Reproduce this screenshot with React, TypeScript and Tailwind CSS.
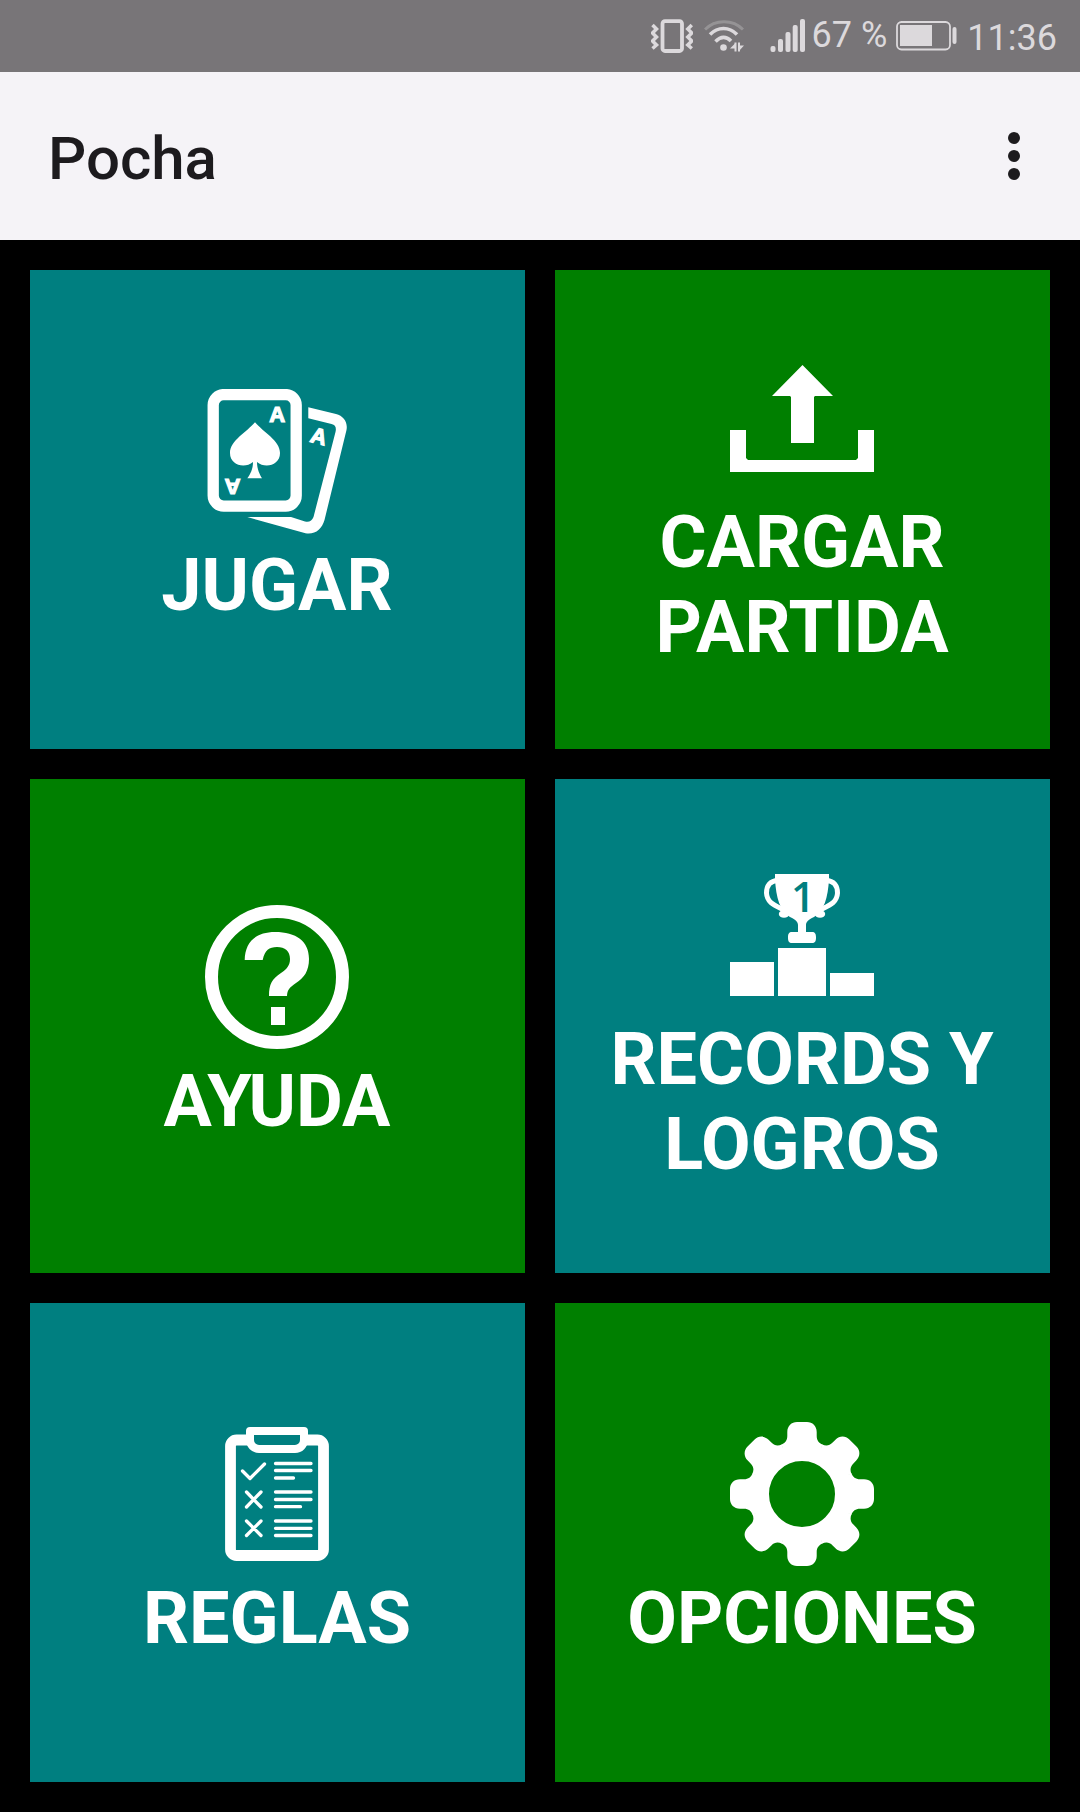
import type { ReactNode } from "react";

function VibrateIcon() {
  return (
    <svg width="42" height="34" viewBox="0 0 42 34" fill="none" stroke="currentColor">
      <rect x="11.5" y="2.2" width="19.5" height="29.800" rx="2.5" strokeWidth="3.800" />
      <path d="M1.500 6l4 4-4 4 4 4-4 4 4 4-4 3.500" strokeWidth="3.500" />
      <path d="M40.800 6l-4 4 4 4-4 4 4 4-4 4 4 3.500" strokeWidth="3.500" />
    </svg>
  );
}

function WifiIcon() {
  return (
    <svg width="40" height="34" viewBox="0 0 40 34" fill="none" stroke="currentColor">
      <path d="M1 10.500C11 0 29 0 39 10.500" strokeWidth="3" opacity="0.3" />
      <path d="M6 15.500C14 7.500 25 7.500 33 15.500" strokeWidth="3.600" />
      <path d="M11.500 22.500C17 17 22 17 27 22" strokeWidth="3.600" />
      <circle cx="19.500" cy="28.500" r="3.300" fill="currentColor" stroke="none" />
      <path d="M31.500 23.500v9M35 23.500v9" strokeWidth="2" />
      <path d="M31.500 24l-5.500 5.500h5.500zM35 32l5-5.500h-5z" fill="currentColor" stroke="none" />
    </svg>
  );
}

function SignalIcon() {
  return (
    <svg width="36" height="34" viewBox="0 0 36 34" fill="currentColor">
      <rect x="0.500" y="27" width="5" height="6" rx="2" />
      <rect x="8" y="20" width="5" height="13" rx="2" />
      <rect x="15.500" y="13" width="5" height="20" rx="2" />
      <rect x="22.700" y="6" width="5" height="27" rx="2" />
      <rect x="30" y="0" width="5" height="33" rx="2" />
    </svg>
  );
}

function BatteryIcon() {
  return (
    <svg width="62" height="30" viewBox="0 0 62 30" fill="none">
      <rect x="1" y="1" width="53" height="27.500" rx="4.500" stroke="currentColor" strokeWidth="1.800" />
      <rect x="4" y="4" width="32" height="21" fill="currentColor" />
      <rect x="56.500" y="6" width="4" height="17" rx="2" fill="currentColor" />
    </svg>
  );
}

function CardsIcon() {
  return (
    <svg width="144" height="146" viewBox="0 0 144 146" className="-mb-[2px]" fill="none">
      <rect x="8.200" y="5.600" width="83" height="111.500" rx="10.500" stroke="white" strokeWidth="11.300" />
      <path
        d="M103.300 18.300L131 25C138.500 27 143 33 141.500 41L119.500 131C117 140 110 146 100.500 144.300L42.300 128H86L100 132.500C104 133.500 107 132 108.500 128L130.500 43C131.500 38.500 130.500 36 126.500 35L103.300 29.300Z"
        fill="white"
      />
      <path
        d="M50 33.300C42 43 25 51.500 25 64C25 76.500 40 80 48 73C48 80 45.500 85 42.300 89.300H57C54.500 85 52 80 52 73C60 80 75 76.500 75 64C75 51.500 58 43 50 33.300Z"
        fill="white"
      />
      <g
        fill="white"
        stroke="white"
        strokeWidth="1.200"
        className="font-['Liberation_Sans',sans-serif] text-[22px] font-bold"
        textAnchor="middle"
      >
        <text x="72.300" y="33">A</text>
        <text transform="translate(27.500 89.500) rotate(180)">A</text>
        <text transform="translate(112 54.500) rotate(15)">A</text>
      </g>
    </svg>
  );
}

function UploadIcon() {
  return (
    <svg width="144" height="144" viewBox="0 0 144 144" fill="white">
      <path d="M72.500 19L103 50H85L84 51V97H61V51L60 50H42Z" />
      <path d="M0 84H16V112L18 114H126L128 112V84H144V126H0Z" />
    </svg>
  );
}

function HelpIcon() {
  return (
    <svg width="144" height="144" viewBox="0 0 144 144" fill="white">
      <circle cx="72" cy="72" r="65.500" fill="none" stroke="white" strokeWidth="13" />
      <path d="M39.700 55C40 37 51 27 70 27C91 27 104 36 104 54C104 66 99 73 91 78C85 82 82 85 82 91H64C64 79 67 74 76 68C82 64 85 60 85 54C85 46 80 42 72 42C64 42 60 45 57.700 55Z" />
      <path d="M66 102H80V120H66Z" />
    </svg>
  );
}

function PodiumIcon() {
  return (
    <svg width="144" height="144" viewBox="0 0 144 144" fill="white">
      <path d="M45 11H99V16C98 35 94 48 84 54C78 57 76 59 76 62V69H82C85 69 86 71 86 74V75C86 78 85 80 82 80H62C59 80 58 78 58 75V74C58 71 59 69 62 69H68V62C68 59 66 57 60 54C50 48 46 35 45 16Z" />
      <path
        d="M48 17.500C40 17.500 36.500 23 36.500 30C37 41 47 43 56 48M96 17.500C104 17.500 107.500 23 107.500 30C107 41 97 43 88 48"
        fill="none"
        stroke="white"
        strokeWidth="5"
      />
      <ellipse cx="54" cy="51" rx="5.200" ry="3.800" />
      <ellipse cx="90" cy="51" rx="5.200" ry="3.800" />
      <text
        x="61"
        y="49"
        className="fill-[#007f80] font-['Open_Sans',sans-serif] text-[42px] font-semibold"
      >
        1
      </text>
      <path d="M0 99H44V133H0ZM48 85H96V133H48ZM100 110H144V133H100Z" />
    </svg>
  );
}

function RulesIcon() {
  return (
    <svg width="144" height="144" viewBox="0 0 144 144" fill="none" stroke="white">
      <rect x="25.500" y="18" width="93" height="115.500" rx="6" strokeWidth="10.800" />
      <path
        d="M45 9H99V18C99 23 95 27 90 27H54C49 27 45 23 45 18Z"
        className="fill-[#007f80]"
        strokeWidth="8"
        strokeLinejoin="round"
      />
      <path
        d="M37.500 49L45 56.500L59.500 42M41.500 70L56 85M56 70L41.500 85M41.500 99L56 113.500M56 99L41.500 113.500"
        strokeWidth="3.300"
        strokeLinecap="round"
        strokeLinejoin="round"
      />
      <path
        d="M70.500 41.500H106M70.500 48.500H106M70.500 56H88.500M70.500 70H106M70.500 77.500H106M70.500 84.700H95.500M70.500 99H106M70.500 106.300H106M70.500 113.500H106"
        strokeWidth="3.300"
        strokeLinecap="round"
      />
    </svg>
  );
}

const angles = [0, 45, 90, 135, 180, 225, 270, 315];

function GearIcon() {
  return (
    <svg width="144" height="144" viewBox="-72 -72 144 144">
      <circle r="41.500" fill="none" stroke="white" strokeWidth="17" />
      {angles.map((a) => (
        <path
          key={a}
          transform={`rotate(${a})`}
          fill="white"
          d="M-20.700 -49.400C-17 -50.800 -14.700 -53.500 -14.700 -58V-62C-14.700 -68 -10.500 -72 -5 -72H5C10.500 -72 14.700 -68 14.700 -62V-58C14.700 -53.500 17 -50.800 20.700 -49.400L16.200 -38.600H-16.200Z"
        />
      ))}
    </svg>
  );
}

type TileProps = {
  icon: ReactNode;
  lines: string[];
  color: "teal" | "green";
};

const colors = {
  teal: "bg-[#007f80]",
  green: "bg-[#007f00]",
};

function Tile({ icon, lines, color }: TileProps) {
  return (
    <button
      className={`flex flex-col items-center justify-center pr-px pb-[3px] text-white ${colors[color]}`}
    >
      <span className="flex h-[144px] items-start justify-center">{icon}</span>
      <span className="pt-[10px] text-[72px] leading-[85px] font-bold">
        {lines.map((l) => (
          <span key={l} className="block whitespace-nowrap">
            {l}
          </span>
        ))}
      </span>
    </button>
  );
}

export default function App() {
  return (
    <div className="flex h-[1812px] w-[1080px] flex-col overflow-hidden bg-black font-['Roboto',sans-serif]">
      <div className="flex h-[72px] shrink-0 items-start justify-end bg-[#787578] pr-[23px] text-[#dcd9dc]">
        <div className="mt-[19px]">
          <VibrateIcon />
        </div>
        <div className="mt-[19px] ml-[11px]">
          <WifiIcon />
        </div>
        <div className="mt-[19px] ml-[26px]">
          <SignalIcon />
        </div>
        <span className="mt-[14px] ml-[6px] text-[36px] leading-[42px] whitespace-nowrap">67 %</span>
        <div className="mt-[21px] ml-[9px]">
          <BatteryIcon />
        </div>
        <span className="mt-[17px] ml-[9px] text-[36px] leading-[42px]">11:36</span>
      </div>

      <header className="flex h-[168px] shrink-0 items-center justify-between bg-[#f5f3f7] pr-[60px] pl-12 text-[#1d1b1e]">
        <h1 className="mt-[6px] text-[60px] leading-[70px] font-medium">Pocha</h1>
        <button className="flex flex-col gap-[6px]">
          <span className="size-3 rounded-full bg-current" />
          <span className="size-3 rounded-full bg-current" />
          <span className="size-3 rounded-full bg-current" />
        </button>
      </header>

      <main className="grid grid-cols-2 grid-rows-[479px_494px_479px] gap-[30px] p-[30px]">
        <Tile icon={<CardsIcon />} lines={["JUGAR"]} color="teal" />
        <Tile icon={<UploadIcon />} lines={["CARGAR", "PARTIDA"]} color="green" />
        <Tile icon={<HelpIcon />} lines={["AYUDA"]} color="green" />
        <Tile icon={<PodiumIcon />} lines={["RECORDS Y", "LOGROS"]} color="teal" />
        <Tile icon={<RulesIcon />} lines={["REGLAS"]} color="teal" />
        <Tile icon={<GearIcon />} lines={["OPCIONES"]} color="green" />
      </main>
    </div>
  );
}
